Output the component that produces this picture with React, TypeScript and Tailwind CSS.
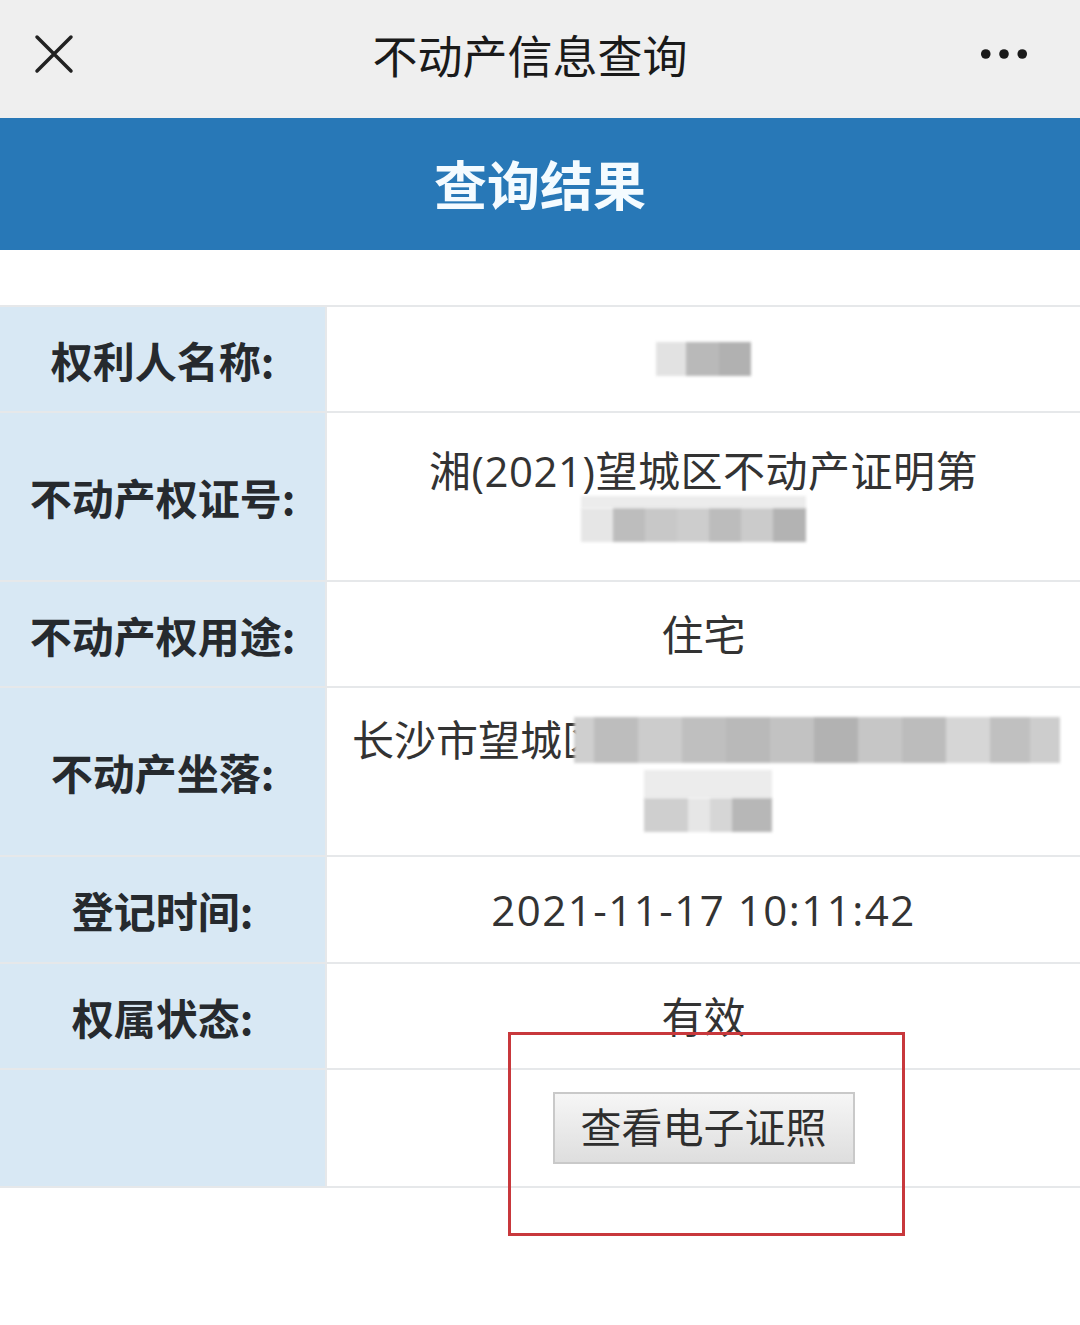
import React from "react";

const FONT = { fontFamily: '"Noto Sans CJK SC", "Noto Sans", sans-serif' };
const VALUE_FONT = { fontFamily: '"Open Sans", "Noto Sans CJK SC", sans-serif' };

type Cell = { w: number; c: string };

// pixelated privacy mask
function Mosaic({ cells, h, className = "" }: { cells: Cell[]; h: number; className?: string }) {
  return (
    <span className={`inline-flex align-middle blur-[1.5px] ${className}`} style={{ height: h }}>
      {cells.map((c, i) => (
        <span key={i} className="block h-full" style={{ width: c.w, background: c.c }} />
      ))}
    </span>
  );
}

function Row({ label, height, children, last }: { label?: string; height: number; children: React.ReactNode; last?: boolean }) {
  return (
    <div className={`flex ${last ? "" : "border-b-2 border-[#e6e8ea]"}`} style={{ height }}>
      <div className="flex w-[325px] shrink-0 items-center justify-center bg-[#d8e8f4] text-[42px] font-bold text-[#262a2e]">
        {label}
      </div>
      <div
        className="flex min-w-0 flex-1 flex-col items-center justify-center border-l-2 border-[#e6e8ea] bg-white text-[42px] text-[#333]"
        style={VALUE_FONT}
      >
        {children}
      </div>
    </div>
  );
}

export default function App() {
  return (
    <div className="relative h-[1325px] w-[1080px] overflow-hidden bg-white" style={FONT}>
      {/* top nav */}
      <div className="flex h-[118px] items-center justify-between bg-[#efefef] pb-[10px] pl-[34px] pr-[52px]">
        <svg viewBox="0 0 40 40" className="h-[40px] w-[40px]">
          <path d="M3 3L37 37M37 3L3 37" stroke="#222" strokeWidth={3.5} strokeLinecap="round" />
        </svg>
        <div className="ml-[6px] text-[45px] leading-none text-[#1a1a1a]">不动产信息查询</div>
        <svg viewBox="0 0 50 12" className="h-[12px] w-[48px]">
          <circle cx="6" cy="6" r="5" fill="#1a1a1a" />
          <circle cx="25" cy="6" r="5" fill="#1a1a1a" />
          <circle cx="44" cy="6" r="5" fill="#1a1a1a" />
        </svg>
      </div>

      {/* blue header */}
      <div className="flex h-[132px] items-center justify-center bg-[#2878b7]">
        <span className="text-[53px] font-bold text-[#f4fbff]">查询结果</span>
      </div>

      <div className="h-[55px]" />

      <div className="border-y-2 border-[#e6e8ea]">
        <Row label="权利人名称:" height={106}>
          <Mosaic
            h={34}
            className="rounded-l-[14px]"
            cells={[
              { w: 30, c: "#e2e2e2" },
              { w: 33, c: "#b9b9b9" },
              { w: 32, c: "#b1b1b1" },
            ]}
          />
        </Row>
        <Row label="不动产权证号:" height={169}>
          <div className="-mt-[6px] leading-[50px] tracking-[0.5px]">湘(2021)望城区不动产证明第</div>
          <div className="flex flex-col items-center pr-[20px]">
            <Mosaic h={12} cells={[{ w: 225, c: "#ececec" }]} />
            <Mosaic
              h={34}
              cells={[
                { w: 32, c: "#e6e6e6" },
                { w: 32, c: "#bdbdbd" },
                { w: 32, c: "#c8c8c8" },
                { w: 32, c: "#cdcdcd" },
                { w: 32, c: "#bcbcbc" },
                { w: 32, c: "#cbcbcb" },
                { w: 33, c: "#b3b3b3" },
              ]}
            />
          </div>
        </Row>
        <Row label="不动产权用途:" height={106}>
          住宅
        </Row>
        <Row label="不动产坐落:" height={169}>
          <div className="flex w-full items-center self-start pl-[25px] pr-[20px] leading-[56px]">
            <span className="whitespace-nowrap">长沙市望城区</span>
            <Mosaic
              h={46}
              className="relative -ml-[30px] rounded-r-[14px]"
              cells={[
                { w: 20, c: "#cfcfcf" },
                { w: 44, c: "#bdbdbd" },
                { w: 44, c: "#cccccc" },
                { w: 44, c: "#bfbfbf" },
                { w: 44, c: "#b9b9b9" },
                { w: 44, c: "#c2c2c2" },
                { w: 44, c: "#b2b2b2" },
                { w: 44, c: "#c6c6c6" },
                { w: 44, c: "#bcbcbc" },
                { w: 44, c: "#d6d6d6" },
                { w: 40, c: "#c0c0c0" },
                { w: 30, c: "#cdcdcd" },
              ]}
            />
          </div>
          <div className="mt-[2px] flex flex-col pl-[8px]">
            <Mosaic h={28} cells={[{ w: 128, c: "#ececec" }]} />
            <Mosaic
              h={34}
              cells={[
                { w: 44, c: "#cfcfcf" },
                { w: 22, c: "#e6e6e6" },
                { w: 22, c: "#d6d6d6" },
                { w: 40, c: "#b7b7b7" },
              ]}
            />
          </div>
        </Row>
        <Row label="登记时间:" height={107}>
          <span className="tracking-[1.5px]">2021-11-17 10:11:42</span>
        </Row>
        <Row label="权属状态:" height={106}>
          有效
        </Row>
        <Row height={116} last>
          <button className="h-[72px] w-[302px] border-2 border-[#c9c9c9] bg-gradient-to-b from-[#f6f6f6] to-[#dedede] text-[41px] text-[#2e2e2e]">
            查看电子证照
          </button>
        </Row>
      </div>

      {/* red highlight box drawn over the page */}
      <div className="absolute left-[508px] top-[1032px] h-[204px] w-[397px] border-[3px] border-[#c8383c]" />
    </div>
  );
}
